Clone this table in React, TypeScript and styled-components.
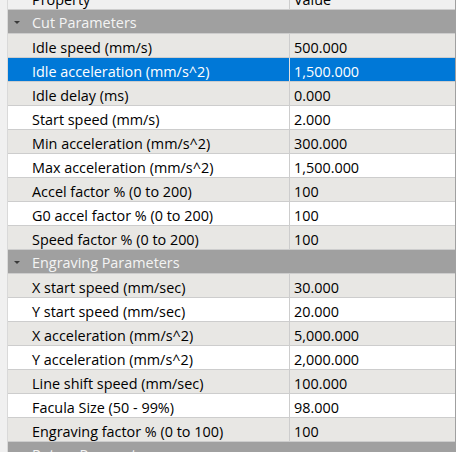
import React from "react";
import styled, { createGlobalStyle } from "styled-components";

const Global = createGlobalStyle`
  html, body { margin: 0; padding: 0; background: #f0f0f0; }
  body { font-family: "Open Sans", "Noto Sans", sans-serif; }
`;

const Page = styled.div`
  display: flex;
  width: 465px;
  height: 452px;
  overflow: hidden;
  background: #f0f0f0;
`;

const Gutter = styled.div`
  width: 7px;
  flex: none;
  background: #f0f0f0;
  border-right: 1px solid #d9d9d9;
`;

const Grid = styled.div`
  width: 447px;
  flex: none;
  display: flex;
  flex-direction: column;
  margin-top: -14px;
  background: #fff;
`;

const RightEdge = styled.div`
  flex: 1;
  background: #fff;
  border-left: 1px solid #a0a0a0;
`;

const Row = styled.div<{ $bg: string; $fg: string }>`
  display: grid;
  grid-template-columns: 281px 1fr;
  height: 23px;
  flex: none;
  border-bottom: 1px solid #cdcdcd;
  background: ${(p) => p.$bg};
  color: ${(p) => p.$fg};
  font-size: 14.4px;
  line-height: 23px;
`;

const NameCell = styled.div`
  padding: 2px 0 0 24px;
  height: 21px;
  white-space: nowrap;
  overflow: hidden;
`;

const ValueCell = styled.div<{ $line: string }>`
  padding: 2px 0 0 4px;
  height: 21px;
  border-left: 1px solid ${(p) => p.$line};
  white-space: nowrap;
  overflow: hidden;
`;

const GroupRow = styled.div`
  display: flex;
  align-items: center;
  height: 23px;
  flex: none;
  background: #a0a0a0;
  color: #f4f4f4;
  border-bottom: 1px solid #cdcdcd;
  font-size: 14.4px;
  line-height: 23px;
`;

const Toggle = styled.span`
  width: 0;
  height: 0;
  margin: 1px 12px 0 6px;
  border-left: 3px solid transparent;
  border-right: 3px solid transparent;
  border-top: 3px solid #3a3a3a;
`;

const GroupLabel = styled.span`
  padding-top: 2px;
`;

type Item = [string, string];

const groups: { title: string; items: Item[] }[] = [
  {
    title: "Cut Parameters",
    items: [
      ["Idle speed (mm/s)", "500.000"],
      ["Idle acceleration (mm/s^2)", "1,500.000"],
      ["Idle delay (ms)", "0.000"],
      ["Start speed (mm/s)", "2.000"],
      ["Min acceleration (mm/s^2)", "300.000"],
      ["Max acceleration (mm/s^2)", "1,500.000"],
      ["Accel factor % (0 to 200)", "100"],
      ["G0 accel factor % (0 to 200)", "100"],
      ["Speed factor % (0 to 200)", "100"],
    ],
  },
  {
    title: "Engraving Parameters",
    items: [
      ["X start speed (mm/sec)", "30.000"],
      ["Y start speed (mm/sec)", "20.000"],
      ["X acceleration (mm/s^2)", "5,000.000"],
      ["Y acceleration (mm/s^2)", "2,000.000"],
      ["Line shift speed (mm/sec)", "100.000"],
      ["Facula Size (50 - 99%)", "98.000"],
      ["Engraving factor % (0 to 100)", "100"],
    ],
  },
  { title: "Rotary Parameters", items: [] },
];

export default function App() {
  return (
    <>
      <Global />
      <Page>
        <Gutter />
        <Grid>
          <Row $bg="#f0f0f0" $fg="#000">
            <NameCell>Property</NameCell>
            <ValueCell $line="#cdcdcd">Value</ValueCell>
          </Row>
          {groups.map((g) => (
            <React.Fragment key={g.title}>
              <GroupRow>
                <Toggle />
                <GroupLabel>{g.title}</GroupLabel>
              </GroupRow>
              {g.items.map(([name, value], i) => {
                const selected = g.title === "Cut Parameters" && i === 1;
                const bg = selected ? "#0078d7" : i % 2 === 0 ? "#e8e7e4" : "#ffffff";
                const fg = selected ? "#ffffff" : "#000000";
                return (
                  <Row key={name} $bg={bg} $fg={fg}>
                    <NameCell>{name}</NameCell>
                    <ValueCell $line={selected ? "#e0e0e0" : "#cdcdcd"}>{value}</ValueCell>
                  </Row>
                );
              })}
            </React.Fragment>
          ))}
        </Grid>
        <RightEdge />
      </Page>
    </>
  );
}
